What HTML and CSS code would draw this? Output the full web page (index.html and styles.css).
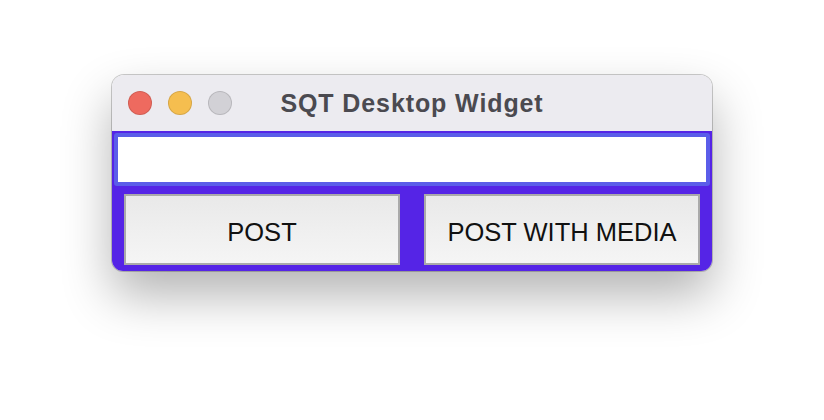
FILE: index.html
```html
<!DOCTYPE html>
<html lang="en">
<head>
  <meta charset="UTF-8">
  <title>SQT Desktop Widget</title>
  <link rel="stylesheet" href="styles.css">
</head>
<body>
  <div class="window">
    <div class="titlebar">
      <div class="lights">
        <span class="light close"></span>
        <span class="light min"></span>
        <span class="light max"></span>
      </div>
      <div class="title">SQT Desktop Widget</div>
    </div>
    <div class="content">
      <input type="text" class="post-input" />
      <div class="actions">
        <button class="btn">POST</button>
        <button class="btn">POST WITH MEDIA</button>
      </div>
    </div>
  </div>
</body>
</html>
```

FILE: styles.css
```css
html, body {
  height: 100%;
}
body {
  margin: 0;
  padding-top: 75px;
  box-sizing: border-box;
  background: #ffffff;
  font-family: 'Liberation Sans', Arial, sans-serif;
}
.window {
  width: 600px;
  margin: 0 auto;
  border-radius: 12px 12px 11px 11px;
  overflow: hidden;
  box-shadow: 0 0 0 1px rgba(0,0,0,0.2), 0 24px 50px rgba(0,0,0,0.3);
}
.titlebar {
  height: 56px;
  background: #ecebf0;
  display: flex;
  align-items: center;
  position: relative;
}
.lights {
  display: flex;
  gap: 16px;
  padding-left: 16px;
}
.light {
  width: 22px;
  height: 22px;
  border-radius: 50%;
  border: 1px solid rgba(0,0,0,0.12);
}
.close { background: #ee6a5f; }
.min { background: #f5be4f; }
.max { background: #d2d1d6; }
.title {
  position: absolute;
  left: 0;
  right: 0;
  text-align: center;
  font-weight: bold;
  font-size: 25px;
  letter-spacing: 0.9px;
  color: #4b4a50;
  pointer-events: none;
}
.content {
  background: #5524e6;
  padding: 2px 2px 6px;
}
.post-input {
  display: block;
  box-sizing: border-box;
  width: 100%;
  height: 53px;
  margin: 0;
  border: 4px solid #5b5de9;
  border-radius: 3px;
  background: #ffffff;
  outline: none;
}
.actions {
  display: flex;
  gap: 24px;
  padding: 0 10px;
  margin-top: 8px;
}
.btn {
  flex: 1;
  height: 71px;
  border: 2px solid #aaaaaa;
  background: linear-gradient(#e9e9e9, #f5f5f5);
  font-family: 'Liberation Sans', Arial, sans-serif;
  font-size: 25.5px;
  color: #111111;
  padding: 5px 0 0;
}
```
